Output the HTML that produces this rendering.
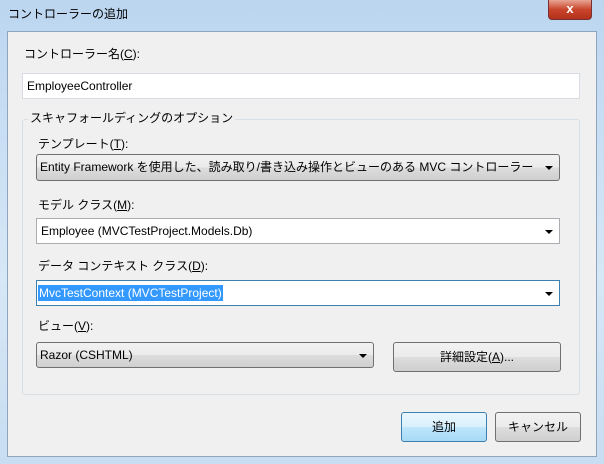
<!DOCTYPE html>
<html><head><meta charset="utf-8"><style>
*{margin:0;padding:0;box-sizing:border-box}
body{width:604px;height:464px;overflow:hidden;font-family:"Liberation Sans","Noto Sans CJK JP",sans-serif;font-size:12px;color:#000;position:relative;background:linear-gradient(#bcd6f0,#d6e7f7 60%,#c8ddf2)}
.a{position:absolute}
.t{position:absolute;white-space:nowrap;line-height:14px}
.client{left:7px;top:31px;width:590px;height:426px;background:#f0f0f0;border:1px solid #8ea5bd}
.edit{background:#fff;border:1px solid #d8dde3;height:26px;padding-left:4px;line-height:24px}
.btn{border:1px solid #707070;border-radius:3px;background:linear-gradient(#f2f2f2 0,#ebebeb 50%,#dddddd 51%,#cfcfcf 100%);text-align:center;line-height:26px}
.arr{position:absolute;right:6px;top:11px;width:0;height:0;border-left:4px solid transparent;border-right:4px solid transparent;border-top:4px solid #000}
u{text-decoration:underline}
.clip{display:inline-block;width:500px;overflow:hidden;white-space:nowrap;vertical-align:top}
</style></head><body>
<div class="t" style="left:8px;top:7px">コントローラーの追加</div>
<div class="a" style="left:548px;top:0;width:44px;height:20px;border:1px solid #7a3030;border-top:none;border-radius:0 0 4px 4px;background:linear-gradient(#e8a593,#c9452c 50%,#b3311a);color:#fff;font-weight:bold;text-align:center;line-height:17px;font-size:13px">x</div>
<div class="a client"></div>
<div class="t" style="left:24px;top:47px">コントローラー名(<u>C</u>):</div>
<div class="a edit" style="left:22px;top:73px;width:558px">EmployeeController</div>
<div class="a" style="left:22px;top:119px;width:558px;height:276px;border:1px solid #d5dfe5;border-radius:3px"></div>
<div class="t" style="left:28px;top:111px;background:#f0f0f0;padding:0 2px">スキャフォールディングのオプション</div>
<div class="t" style="left:38px;top:137px">テンプレート(<u>T</u>):</div>
<div class="a btn" style="left:36px;top:154px;width:524px;height:27px;text-align:left;padding-left:3px;line-height:25px"><span class="clip">Entity Framework を使用した、読み取り/書き込み操作とビューのある MVC コントローラー</span><span class="arr"></span></div>
<div class="t" style="left:38px;top:198px">モデル クラス(<u>M</u>):</div>
<div class="a edit" style="left:36px;top:218px;width:524px;border-color:#abadb3">Employee (MVCTestProject.Models.Db)<span class="arr"></span></div>
<div class="t" style="left:38px;top:259px">データ コンテキスト クラス(<u>D</u>):</div>
<div class="a edit" style="left:36px;top:280px;width:524px;border-color:#3c7fb1;padding-left:1px"><span style="background:#3399ff;color:#fff;padding:1px 1px">MvcTestContext (MVCTestProject)</span><span class="arr"></span></div>
<div class="t" style="left:38px;top:319px">ビュー(<u>V</u>):</div>
<div class="a btn" style="left:36px;top:342px;width:338px;height:26px;text-align:left;padding-left:3px;line-height:24px">Razor (CSHTML)<span class="arr"></span></div>
<div class="a btn" style="left:393px;top:342px;width:168px;height:30px;line-height:28px">詳細設定(<u>A</u>)...</div>
<div class="a btn" style="left:401px;top:412px;width:86px;height:30px;line-height:28px;border-color:#3c7fb1;background:linear-gradient(#eaf6fd,#d9f0fc 50%,#bee6fd 51%,#a7d9f5)">追加</div>
<div class="a btn" style="left:495px;top:412px;width:86px;height:30px;line-height:28px">キャンセル</div>
</body></html>
